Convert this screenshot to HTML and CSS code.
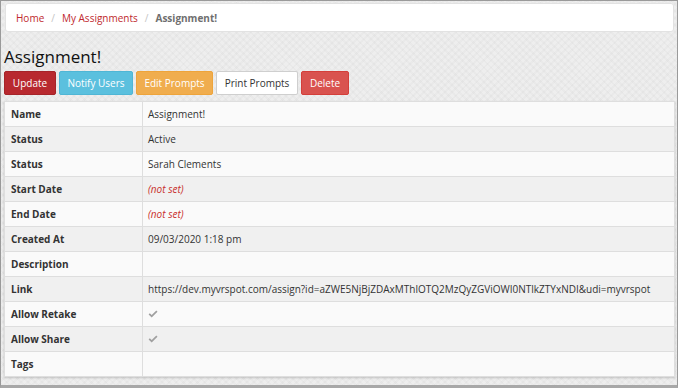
FILE: index.html
```html
<!DOCTYPE html>
<html>
<head>
<meta charset="utf-8">
<link rel="stylesheet" href="styles.css">
</head>
<body>
<div class="frame">
  <nav class="crumbs">
    <a class="crumb-link" href="#">Home</a>
    <span class="sep">/</span>
    <a class="crumb-link" href="#">My Assignments</a>
    <span class="sep">/</span>
    <span class="crumb-active">Assignment!</span>
  </nav>
  <h1 class="title">Assignment!</h1>
  <div class="actions">
    <button class="btn btn-update">Update</button>
    <button class="btn btn-notify">Notify Users</button>
    <button class="btn btn-edit">Edit Prompts</button>
    <button class="btn btn-print">Print Prompts</button>
    <button class="btn btn-delete">Delete</button>
  </div>
  <table class="details">
    <tr><th>Name</th><td>Assignment!</td></tr>
    <tr><th>Status</th><td>Active</td></tr>
    <tr><th>Status</th><td>Sarah Clements</td></tr>
    <tr><th>Start Date</th><td><span class="not-set">(not set)</span></td></tr>
    <tr><th>End Date</th><td><span class="not-set">(not set)</span></td></tr>
    <tr><th>Created At</th><td>09/03/2020 1:18 pm</td></tr>
    <tr><th>Description</th><td></td></tr>
    <tr><th>Link</th><td>https://dev.myvrspot.com/assign?id=aZWE5NjBjZDAxMThlOTQ2MzQyZGViOWI0NTlkZTYxNDI&amp;udi=myvrspot</td></tr>
    <tr><th>Allow Retake</th><td><svg class="check" viewBox="0 0 10 8" width="10" height="8"><path d="M0.6 4.4 L1.8 3.2 L3.7 5.1 L8.3 0.5 L9.5 1.7 L3.7 7.4 Z"/></svg></td></tr>
    <tr><th>Allow Share</th><td><svg class="check" viewBox="0 0 10 8" width="10" height="8"><path d="M0.6 4.4 L1.8 3.2 L3.7 5.1 L8.3 0.5 L9.5 1.7 L3.7 7.4 Z"/></svg></td></tr>
    <tr><th>Tags</th><td></td></tr>
  </table>
</div>
</body>
</html>
```

FILE: styles.css
```css
html, body {
  margin: 0;
  padding: 0;
}
body {
  font-family: "Open Sans", "Liberation Sans", sans-serif;
  font-size: 10px;
  color: #333;
  background: #ececec;
}
.frame {
  box-sizing: border-box;
  width: 678px;
  height: 388px;
  border: 1px solid #9a9a9a;
  border-bottom: 3px solid #a8a8a8;
  padding: 2px 3px 0 3px;
  background-color: #eeeeee;
  background-image:
    repeating-linear-gradient(45deg, rgba(0,0,0,0.018) 0 2px, transparent 2px 5px),
    repeating-linear-gradient(-45deg, rgba(0,0,0,0.018) 0 2px, transparent 2px 5px);
  overflow: hidden;
}
.crumbs {
  display: flex;
  align-items: center;
  gap: 7px;
  height: 29px;
  box-sizing: border-box;
  margin-left: 1px;
  padding: 0 10px;
  background: #fff;
  border: 1px solid #e2e2e2;
  border-radius: 3px;
  font-size: 10px;
}
.crumb-link {
  color: #c0282d;
  text-decoration: none;
}
.sep {
  color: #c4c4c4;
}
.crumb-active {
  color: #6f6f6f;
  font-weight: 700;
}
.title {
  margin: 12px 0 0 0;
  font-size: 17px;
  font-weight: 400;
  line-height: 26px;
  color: #111;
}
.actions {
  display: flex;
  gap: 3px;
  margin-top: 1px;
}
.btn {
  box-sizing: border-box;
  font-family: inherit;
  font-size: 10px;
  line-height: 14px;
  padding: 4px 0;
  text-align: center;
  border: 1px solid transparent;
  border-radius: 2px;
  color: #fff;
  cursor: pointer;
}
.btn-update { width: 52px; background: #b8292f; border-color: #a52429; }
.btn-notify { width: 74px; background: #5bc0de; border-color: #4fb6d5; }
.btn-edit { width: 77px; background: #f0ad4e; border-color: #eea43b; }
.btn-print { width: 82px; background: #fff; border-color: #cfcfcf; color: #333; }
.btn-delete { width: 48px; background: #d9534f; border-color: #d43f3a; }
.details {
  margin-top: 6px;
  width: 671px;
  border-collapse: collapse;
  border: 1px solid #c8c8c8;
  box-shadow: 0 1px 2px rgba(0,0,0,0.18);
  background: #fafafa;
}
.details tr {
  height: 25px;
}
.details tr:nth-child(even) {
  background: #f0f0f0;
}
.details th, .details td {
  border: 1px solid #dedede;
  padding: 0 6px;
  text-align: left;
  vertical-align: middle;
  font-size: 10px;
}
.details th {
  width: 125px;
  font-weight: 700;
  color: #333;
}
.details td {
  padding-left: 5px;
  color: #333;
}
.not-set {
  color: #c9302c;
  font-style: italic;
}
.check {
  display: block;
  fill: #a0a0a0;
}
```
